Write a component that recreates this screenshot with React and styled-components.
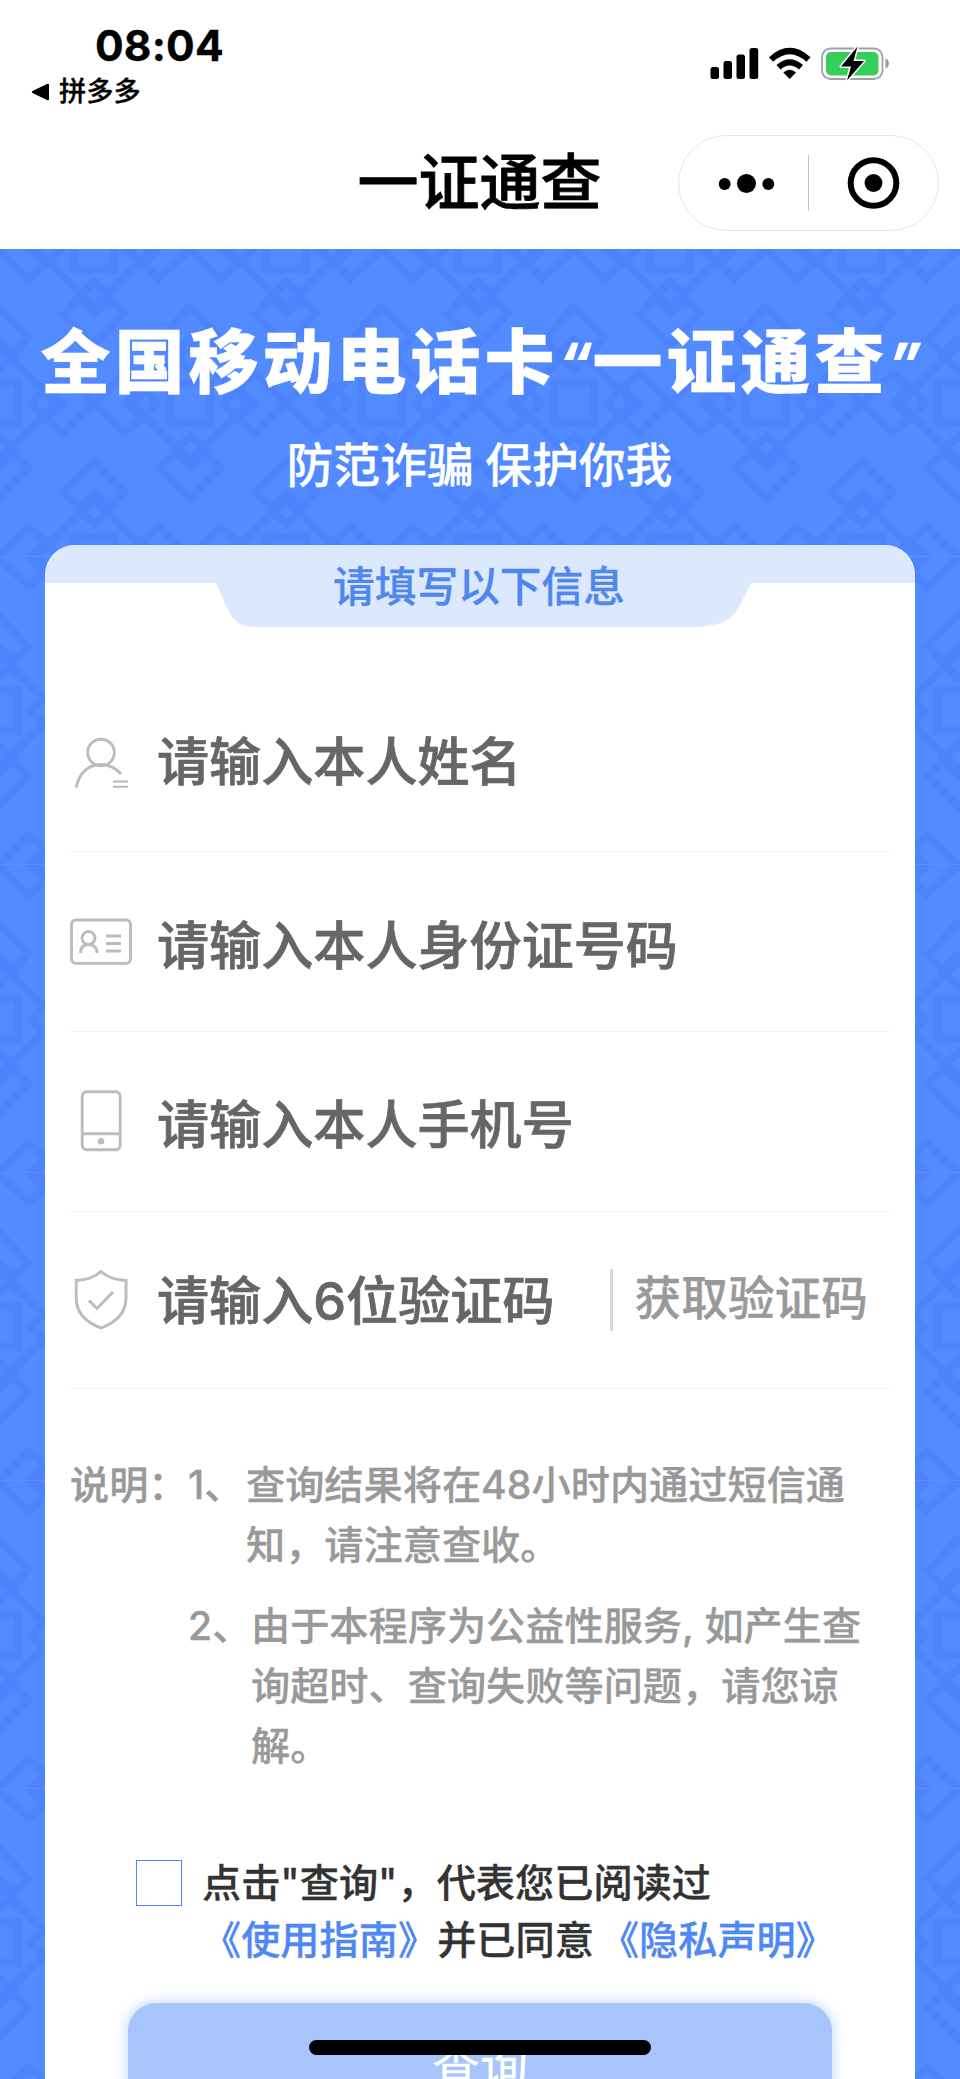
import React from 'react'

import styled, { createGlobalStyle, css } from 'styled-components'

const GlobalStyle = createGlobalStyle`
  * {
    box-sizing: border-box;
  }

  body {
    margin: 0;
    background: #fff;
    font-family: Inter, "Noto Sans CJK SC", sans-serif;
    font-weight: 500;
    font-kerning: none;
    -webkit-text-stroke: 0.3px currentColor;
  }

  p, h1, h2 {
    margin: 0;
    font-weight: inherit;
  }
`

// one lattice knot: centre square, big diamond, and an arrow on each side
const knot = (x, y) => `
  <g transform="translate(${x} ${y})">
    <path d="M-20-20H20V20H-20Z M0-58L58 0L0 58L-58 0Z"/>
    ${[0, 90, 180, 270].map(a => `
      <path transform="rotate(${a})" d="M0 33L16 48L0 64L-16 48Z M-18 52L-30 65L0 96L30 65L18 52"/>
    `).join('')}
  </g>`

const tile = `
  <svg xmlns="http://www.w3.org/2000/svg" width="192" height="308">
    <g fill="none" stroke="#4d84fd" stroke-width="8">
      ${[[-98, 0], [94, 0], [286, 0], [-2, 154], [190, 154], [-98, 308], [94, 308], [286, 308]]
        .map(([x, y]) => knot(x, y)).join('')}
    </g>
    <path d="M0 307.5H192" stroke="#5a90ff"/>
  </svg>`

const Page = styled.div`
  position: relative;
  display: flex;
  flex-direction: column;
  width: 960px;
  height: 2079px;
  overflow: hidden;
`

const Header = styled.header`
  height: 249px;
  flex: none;
  background: #fff;
  color: #000;
`

const StatusBar = styled.div`
  height: 126px;
  display: flex;
  justify-content: space-between;
  padding: 21px 70px 0 31px;
`

const Clock = styled.p`
  margin-left: 64px;
  font-size: 42.5px;
  line-height: 50px;
  font-weight: 700;
  letter-spacing: 0.2px;
`

const BackApp = styled.p`
  display: flex;
  align-items: center;
  gap: 9px;
  font-size: 27.3px;
  line-height: 42px;
`

const StatusIcons = styled.svg`
  width: 180px;
  height: 36px;
  margin: 24px 0 0;
`

const NavBar = styled.div`
  display: grid;
  grid-template-columns: 1fr auto 1fr;
  align-items: center;
  padding: 9px 21px 0 20px;
`

const NavTitle = styled.h1`
  grid-column: 2;
  padding-top: 1px;
  font-size: 61px;
  line-height: 95px;
  -webkit-text-stroke-width: 0.8px;
`

const Capsule = styled.div`
  justify-self: end;
  width: 261px;
  height: 96px;
  display: flex;
  align-items: center;
  border: 1px solid #e6e6e6;
  border-radius: 48px;

  svg {
    flex: 1;
    height: 60px;
  }
`

const CapsuleLine = styled.i`
  width: 1px;
  height: 56px;
  background: #c4c4c4;
`

const Body = styled.main`
  flex: 1;
  display: flex;
  flex-direction: column;
  align-items: center;
  min-height: 0;
  background: #528bff url("data:image/svg+xml,${encodeURIComponent(tile)}");
`

const Banner = styled.h2`
  display: flex;
  margin-top: 69px;
  padding-left: 3px;
  font-size: 70px;
  line-height: 90px;
  font-weight: 900;
  letter-spacing: 4px;
  color: #fff;
  white-space: nowrap;
`

const Quote = styled.span`
  width: 34px;
  font-size: 54px;
  font-weight: 800;
  font-style: italic;
  letter-spacing: 0;
`

const Slogan = styled.p`
  margin-top: 27px;
  padding-right: 1px;
  font-size: 46.8px;
  line-height: 60px;
  word-spacing: -1px;
  color: #fff;
`

const Card = styled.section`
  width: 870px;
  flex: 1;
  margin-top: 50px;
  border-radius: 30px 30px 0 0;
  background: #fff;
`

const CardTab = styled.div`
  height: 82px;
  padding: 12px 2px 0 0;
  font-size: 41.7px;
  line-height: 60px;
  text-align: center;
  color: #4f87ee;
  background: #dce8fd;
  clip-path: path("M0 38V32C2 12 14 1 32 0H838C856 1 868 12 870 32V38H706C696 58 692 70 680 76Q668 82 640 82H210Q192 82 184 67L171 38Z");
`

const FieldList = styled.div`
  padding-top: 46px;
`

const Field = styled.div`
  display: flex;
  align-items: center;
  height: ${({ $height }) => $height}px;
  margin: 0 25px;
  border-bottom: 1px solid #f3f3f3;
`

const FieldIcon = styled.svg`
  flex: none;
  width: 62px;
  height: 64px;
  margin-right: 25px;
  fill: none;
  stroke: #bbbbc2;
  stroke-width: 2.9;
`

const FieldText = styled.p`
  padding-top: ${({ $drop }) => $drop || 0}px;
  font-size: 52.1px;
  line-height: 70px;
  color: #666;
  white-space: nowrap;
  -webkit-text-stroke-width: 0.7px;
`

const CodeButton = styled.p`
  margin-left: auto;
  padding: 0 22px 4px 22px;
  border-left: 3px solid #d8d8d8;
  font-size: 46.7px;
  line-height: 58px;
  color: #999;
`

const Notes = styled.div`
  display: grid;
  grid-template-columns: 118px 1fr;
  row-gap: 21px;
  margin: 66px 25px 0;
  font-size: 39.2px;
  line-height: 60px;
  color: #999;
  white-space: nowrap;
`

const Note = styled.div`
  grid-column: 2;
  display: grid;
  grid-template-columns: ${({ $indent }) => $indent}px 1fr;
`

const Agreement = styled.div`
  display: flex;
  margin: 77px 0 0 91px;
  font-size: 39.2px;
  line-height: 57px;
  color: #333;
  white-space: nowrap;

  p {
    padding-top: 1px;
  }
`

const Checkbox = styled.span`
  width: 46px;
  height: 46px;
  margin: 7px 20px 0 0;
  border: 1px solid #4f87f5;
`

const Link = styled.a`
  color: #4f87f5;
  ${({ $gap }) => $gap && css`
    margin-left: 6px;
  `}
`

const Submit = styled.div`
  width: 704px;
  height: 130px;
  margin: 35px auto 0;
  border-radius: 28px;
  background: #a7c4fb;
  box-shadow: 0 0 14px rgba(79, 135, 255, 0.4);
  font-size: 48px;
  font-weight: 400;
  line-height: 126px;
  text-align: center;
  color: #fff;
`

const HomeIndicator = styled.div`
  position: absolute;
  left: 309px;
  bottom: 24px;
  width: 342px;
  height: 15px;
  border-radius: 8px;
  background: #000;
`

const UserIcon = () => (
  <FieldIcon viewBox="0 0 62 64">
    <circle cx="31" cy="22.500" r="13.3" />
    <path d="M6.2 57.500C9 42.500 19 34.500 31 34.500C38.500 34.500 46 38.500 51 44" />
    <path d="M43 51.500H58M43 56.700H58" strokeWidth="2" />
  </FieldIcon>
)

const IdCardIcon = () => (
  <FieldIcon viewBox="0 0 62 64">
    <rect x="1.500" y="10" width="59" height="43.400" rx="4.500" />
    <circle cx="18.500" cy="28" r="6.500" />
    <path d="M10.500 43C10.500 37 14 34.500 18.500 34.500S27 37 27 43" />
    <path d="M36 26H51M36 33.500H51M36 41H51" />
  </FieldIcon>
)

const PhoneIcon = () => (
  <FieldIcon viewBox="0 0 62 64">
    <rect x="12.200" y="1.700" width="38" height="58" rx="4.500" />
    <path d="M12 43.800H50" />
    <circle cx="31" cy="51.300" r="3.300" fill="#bbbbc2" stroke="none" />
  </FieldIcon>
)

const ShieldIcon = () => (
  <FieldIcon viewBox="0 0 62 64">
    <path d="M31 3.500C25 9 16 12 6.200 12.500V30C6.200 44 15 54 31 60C47 54 56 44 56 30V12.500C46 12 37 9 31 3.500Z" />
    <path d="M19 32.500L27 40.500L43 24" />
  </FieldIcon>
)

const Status = () => (
  <StatusIcons viewBox="710 45 180 36">
    <rect x="710.500" y="67" width="8.500" height="12" rx="2.500" />
    <rect x="723.500" y="61" width="8.500" height="18" rx="2.500" />
    <rect x="736.500" y="54.500" width="8.500" height="24.500" rx="2.500" />
    <rect x="749.500" y="48" width="8.700" height="31" rx="2.500" />
    <g fill="none" stroke="#000" strokeWidth="6">
      <path d="M771 59.500Q789.700 42.500 808.500 59.500" />
      <path d="M778.500 67.300Q789.700 57.500 801 67.300" />
    </g>
    <path d="M783.300 72.500Q789.700 67 796 72.500L789.700 79Z" />
    <rect x="822" y="48.500" width="60.500" height="30.500" rx="8.500" fill="#fff" stroke="#a3a0a6" strokeWidth="1.800" />
    <rect x="826" y="52" width="52.500" height="23.500" rx="5" fill="#34cf5b" />
    <path d="M885.500 58.500C890 60 890 67 885.500 68.500Z" fill="#9b989e" />
    <path d="M857.500 46.500L841 66.500H851L847 80.500L864 61H853.500Z" stroke="#fff" strokeWidth="3" paintOrder="stroke" strokeLinejoin="round" />
  </StatusIcons>
)

const fields = [
  { icon: UserIcon, text: '请输入本人姓名', height: 179, drop: 2 },
  { icon: IdCardIcon, text: '请输入本人身份证号码', height: 180, drop: 11 },
  { icon: PhoneIcon, text: '请输入本人手机号', height: 180, drop: 9 },
  { icon: ShieldIcon, text: '请输入6位验证码', height: 177, drop: 3, action: '获取验证码' },
]

const App = () => (
  <Page>
    <GlobalStyle />
    <Header>
      <StatusBar>
        <div>
          <Clock>08:04</Clock>
          <BackApp>
            <svg width="19" height="18" viewBox="0 0 19 18">
              <path d="M18 2V16Q18 18 16 17L1.500 10Q0 9 1.500 8L16 1Q18 0 18 2Z" />
            </svg>
            拼多多
          </BackApp>
        </div>
        <Status />
      </StatusBar>
      <NavBar>
        <NavTitle>一证通查</NavTitle>
        <Capsule>
          <svg viewBox="0 0 130 60">
            <circle cx="46" cy="31" r="6" />
            <circle cx="68" cy="30.500" r="9.600" />
            <circle cx="90" cy="31" r="6" />
          </svg>
          <CapsuleLine />
          <svg viewBox="0 0 130 60">
            <circle cx="65" cy="30" r="23" fill="none" stroke="#000" strokeWidth="6" />
            <circle cx="65" cy="30" r="9" />
          </svg>
        </Capsule>
      </NavBar>
    </Header>

    <Body>
      <Banner>
        全国移动电话卡<Quote>“</Quote>一证通查<Quote>”</Quote>
      </Banner>
      <Slogan>防范诈骗 保护你我</Slogan>

      <Card>
        <CardTab>请填写以下信息</CardTab>
        <FieldList>
          {fields.map(({ icon: Icon, text, height, drop, action }) => (
            <Field key={text} $height={height}>
              <Icon />
              <FieldText $drop={drop}>{text}</FieldText>
              {action && <CodeButton>{action}</CodeButton>}
            </Field>
          ))}
        </FieldList>

        <Notes>
          <span>说明：</span>
          <Note $indent={58}>
            <span>1、</span>
            <p>查询结果将在48小时内通过短信通<br />知，请注意查收。</p>
          </Note>
          <Note $indent={63}>
            <span>2、</span>
            <p>由于本程序为公益性服务, 如产生查<br />询超时、查询失败等问题，请您谅<br />解。</p>
          </Note>
        </Notes>

        <Agreement>
          <Checkbox />
          <p>
            点击"查询"，代表您已阅读过<br />
            <Link>《使用指南》</Link>并已同意<Link $gap>《隐私声明》</Link>
          </p>
        </Agreement>

        <Submit>查询</Submit>
      </Card>
    </Body>

    <HomeIndicator />
  </Page>
)

export default App
